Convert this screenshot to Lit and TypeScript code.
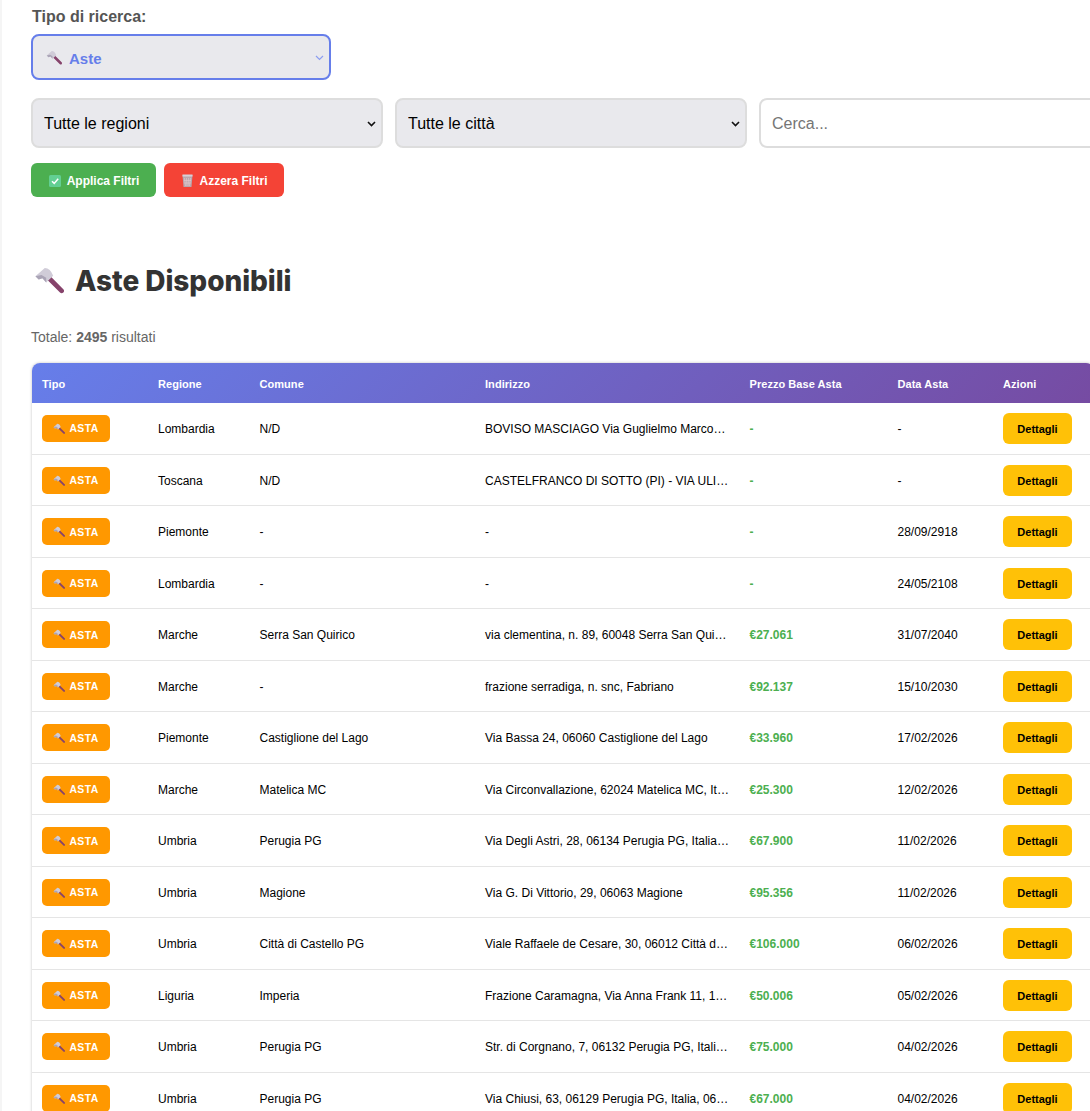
import { LitElement, css, html, svg } from "lit";
import { customElement } from "lit/decorators.js";

type Row = [string, string, string, string, string];

const ROWS: Row[] = [
    ["Lombardia", "N/D", "BOVISO MASCIAGO Via Guglielmo Marco…", "-", "-"],
    ["Toscana", "N/D", "CASTELFRANCO DI SOTTO (PI) - VIA ULI…", "-", "-"],
    ["Piemonte", "-", "-", "-", "28/09/2918"],
    ["Lombardia", "-", "-", "-", "24/05/2108"],
    ["Marche", "Serra San Quirico", "via clementina, n. 89, 60048 Serra San Qui…", "€27.061", "31/07/2040"],
    ["Marche", "-", "frazione serradiga, n. snc, Fabriano", "€92.137", "15/10/2030"],
    ["Piemonte", "Castiglione del Lago", "Via Bassa 24, 06060 Castiglione del Lago", "€33.960", "17/02/2026"],
    ["Marche", "Matelica MC", "Via Circonvallazione, 62024 Matelica MC, It…", "€25.300", "12/02/2026"],
    ["Umbria", "Perugia PG", "Via Degli Astri, 28, 06134 Perugia PG, Italia…", "€67.900", "11/02/2026"],
    ["Umbria", "Magione", "Via G. Di Vittorio, 29, 06063 Magione", "€95.356", "11/02/2026"],
    ["Umbria", "Città di Castello PG", "Viale Raffaele de Cesare, 30, 06012 Città d…", "€106.000", "06/02/2026"],
    ["Liguria", "Imperia", "Frazione Caramagna, Via Anna Frank 11, 1…", "€50.006", "05/02/2026"],
    ["Umbria", "Perugia PG", "Str. di Corgnano, 7, 06132 Perugia PG, Itali…", "€75.000", "04/02/2026"],
    ["Umbria", "Perugia PG", "Via Chiusi, 63, 06129 Perugia PG, Italia, 06…", "€67.000", "04/02/2026"],
];

const COLS = [116, 101.5, 225.5, 264.5, 148, 105.5, 101];

// emoji are drawn by hand, the sandbox has no colour emoji font
const hammer = (size: number) => html`<svg class="emoji" width=${size} height=${size} viewBox="0 0 32 32">
    ${svg`<path d="M14.5 11.5 L29.5 26.5" stroke="#86436b" stroke-width="5" stroke-linecap="round" />
    <path d="M1.5 11 L11.5 2 Q17.5 2 20.5 10.5 L13 17.5 L9 13 L5 14.5 Z" fill="#d0ccd8" />
    <path d="M1.5 11 L8 9.5 L13 12.5 L13 17.5 L9 13 L5 14.5 Z" fill="#aaa4b6" />`}
</svg>`;

const check = html`<svg class="emoji" width="12" height="12" viewBox="0 0 12 12">
    ${svg`<rect width="12" height="12" rx="1.5" fill="#62cf92" />
    <path d="M3 6.2 L5.2 8.4 L9.2 3.8" fill="none" stroke="#fff" stroke-width="1.5" />`}
</svg>`;

const bin = html`<svg class="emoji" width="12" height="13" viewBox="0 0 12 13">
    ${svg`<path d="M1.5 1 H11.5 L10.5 13 H2.5 Z" fill="#b9a7ad" />
    <path d="M1.5 1.5 H11.5" stroke="#d8d0d6" stroke-width="2" />
    <path d="M3.5 4 L4.5 12 M5.5 4 L5.9 12 M7.5 4 L7.1 12 M9.5 4 L8.5 12 M3 6.5 H10 M3.2 9 H9.8" stroke="#e6c9cf" stroke-width=".6" />`}
</svg>`;

@customElement("app-root")
export class AppRoot extends LitElement {
    static styles = css`
        :host {
            display: block;
            width: 1090px;
            height: 1111px;
            overflow: hidden;
            background: #fff;
            border-left: 2px solid #f5f5f5;
            box-sizing: border-box;
            padding-left: 29px;
            font-family: "Liberation Sans", Arial, sans-serif;
            color: #000;
        }
        .emoji {
            flex: none;
            display: block;
        }
        .type-label {
            display: block;
            padding-top: 8px;
            font-size: 16px;
            line-height: 18px;
            font-weight: 700;
            color: #555;
            margin-bottom: 8px;
            padding-left: 1px;
        }
        .type-select {
            width: 300px;
            height: 46px;
            box-sizing: border-box;
            border: 2px solid #667eea;
            border-radius: 8px;
            background: #e9e9ed;
            display: flex;
            align-items: center;
            gap: 7px;
            padding: 2px 5px 0 13px;
            color: #667eea;
            font-size: 15px;
            font-weight: 700;
        }
        .type-select .chev {
            margin-left: auto;
            margin-top: -1px;
        }
        .filters {
            display: flex;
            gap: 12px;
            margin-top: 18px;
            width: 1080px;
        }
        .filters select,
        .filters input {
            flex: none;
            width: 352px;
            height: 50px;
            box-sizing: border-box;
            border: 2px solid #ddd;
            border-radius: 8px;
            font-family: inherit;
            font-size: 16px;
            padding: 0 24px 0 11px;
            margin: 0;
            outline: none;
        }
        .filters select {
            appearance: none;
            background-color: #e9e9ed;
            background-image: url("data:image/svg+xml,%3Csvg xmlns='http://www.w3.org/2000/svg' width='9' height='6'%3E%3Cpath d='M1 1l3.5 3.5L8 1' fill='none' stroke='%23111' stroke-width='1.6'/%3E%3C/svg%3E");
            background-repeat: no-repeat;
            background-position: right 5px top calc(50% + 1px);
            color: #000;
        }
        .filters input {
            background: #fff;
            padding: 2px 11px 0;
        }
        .filters input::placeholder {
            color: #757575;
        }
        .actions {
            display: flex;
            gap: 8px;
            margin-top: 15px;
        }
        .btn {
            height: 34px;
            box-sizing: border-box;
            display: flex;
            align-items: center;
            justify-content: center;
            gap: 6px;
            border: none;
            border-radius: 6px;
            color: #fff;
            font-family: inherit;
            font-size: 12px;
            font-weight: 700;
            padding: 1px 0 0 1px;
        }
        .btn.apply {
            width: 125px;
            background: #4caf50;
        }
        .btn.reset {
            width: 120px;
            background: #f44336;
        }
        h2 {
            display: flex;
            align-items: center;
            gap: 11px;
            margin: 64px 0 0 3px;
            height: 40px;
            font-family: Inter, sans-serif;
            font-size: 28px;
            font-weight: 800;
            letter-spacing: -0.05px;
            color: #333;
        }
        .total {
            margin-top: 28px;
            font-size: 14px;
            line-height: 16px;
            color: #666;
        }
        .table-card {
            margin-top: 18px;
            width: 1062px;
            border-radius: 8px 8px 0 0;
            overflow: hidden;
            box-shadow: 0 0 3px rgba(0, 0, 0, 0.25);
            background: #fff;
            margin-left: 1px;
        }
        table {
            width: 1062px;
            table-layout: fixed;
            border-collapse: collapse;
            font-size: 12px;
        }
        thead tr {
            background: linear-gradient(135deg, #667eea 0%, #764ba2 100%);
        }
        th {
            height: 39.5px;
            padding: 2px 10px 0;
            box-sizing: border-box;
            text-align: left;
            color: #fff;
            font-size: 11px;
            font-weight: 700;
            letter-spacing: 0.05px;
        }
        td {
            height: 51.5px;
            box-sizing: border-box;
            padding: 0.5px 10px 0;
            border-bottom: 1px solid #e5e5e5;
            white-space: nowrap;
        }
        td.text {
            padding-top: 2px;
        }
        .badge {
            width: 68px;
            height: 27px;
            box-sizing: border-box;
            border-radius: 5px;
            background: #ff9800;
            color: #fff;
            display: flex;
            align-items: center;
            justify-content: center;
            gap: 4px;
            padding-top: 1px;
            font-size: 10.4px;
            font-weight: 700;
            letter-spacing: 0.4px;
        }
        .price {
            color: #4caf50;
            font-weight: 700;
        }
        .details {
            display: block;
            width: 69px;
            height: 31px;
            padding: 1px 0 0;
            border: none;
            border-radius: 6px;
            background: #ffc107;
            color: #000;
            font-family: inherit;
            font-size: 11px;
            font-weight: 700;
        }
    `;

    render() {
        return html`
            <label class="type-label">Tipo di ricerca:</label>
            <div class="type-select">
                ${hammer(16)}<span>Aste</span>
                <svg class="chev" width="9" height="6" viewBox="0 0 9 6">
                    <path d="M1 1 L4.5 4.5 L8 1" fill="none" stroke="#8c9df0" stroke-width="1.2" />
                </svg>
            </div>
            <div class="filters">
                <select><option>Tutte le regioni</option></select>
                <select><option>Tutte le città</option></select>
                <input type="text" placeholder="Cerca..." />
            </div>
            <div class="actions">
                <button class="btn apply">${check}Applica Filtri</button>
                <button class="btn reset">${bin}Azzera Filtri</button>
            </div>
            <h2>${hammer(30)}<span>Aste Disponibili</span></h2>
            <div class="total">Totale: <b>2495</b> risultati</div>
            <div class="table-card">
                <table>
                    <colgroup>${COLS.map((w) => html`<col style="width:${w}px" />`)}</colgroup>
                    <thead>
                        <tr>
                            <th>Tipo</th>
                            <th>Regione</th>
                            <th>Comune</th>
                            <th>Indirizzo</th>
                            <th>Prezzo Base Asta</th>
                            <th>Data Asta</th>
                            <th>Azioni</th>
                        </tr>
                    </thead>
                    <tbody>
                        ${ROWS.map(
                            ([region, city, address, price, date]) => html`
                                <tr>
                                    <td><span class="badge">${hammer(12)}ASTA</span></td>
                                    <td class="text">${region}</td>
                                    <td class="text">${city}</td>
                                    <td class="text">${address}</td>
                                    <td class="text price">${price}</td>
                                    <td class="text">${date}</td>
                                    <td><button class="details">Dettagli</button></td>
                                </tr>
                            `
                        )}
                    </tbody>
                </table>
            </div>
        `;
    }
}
